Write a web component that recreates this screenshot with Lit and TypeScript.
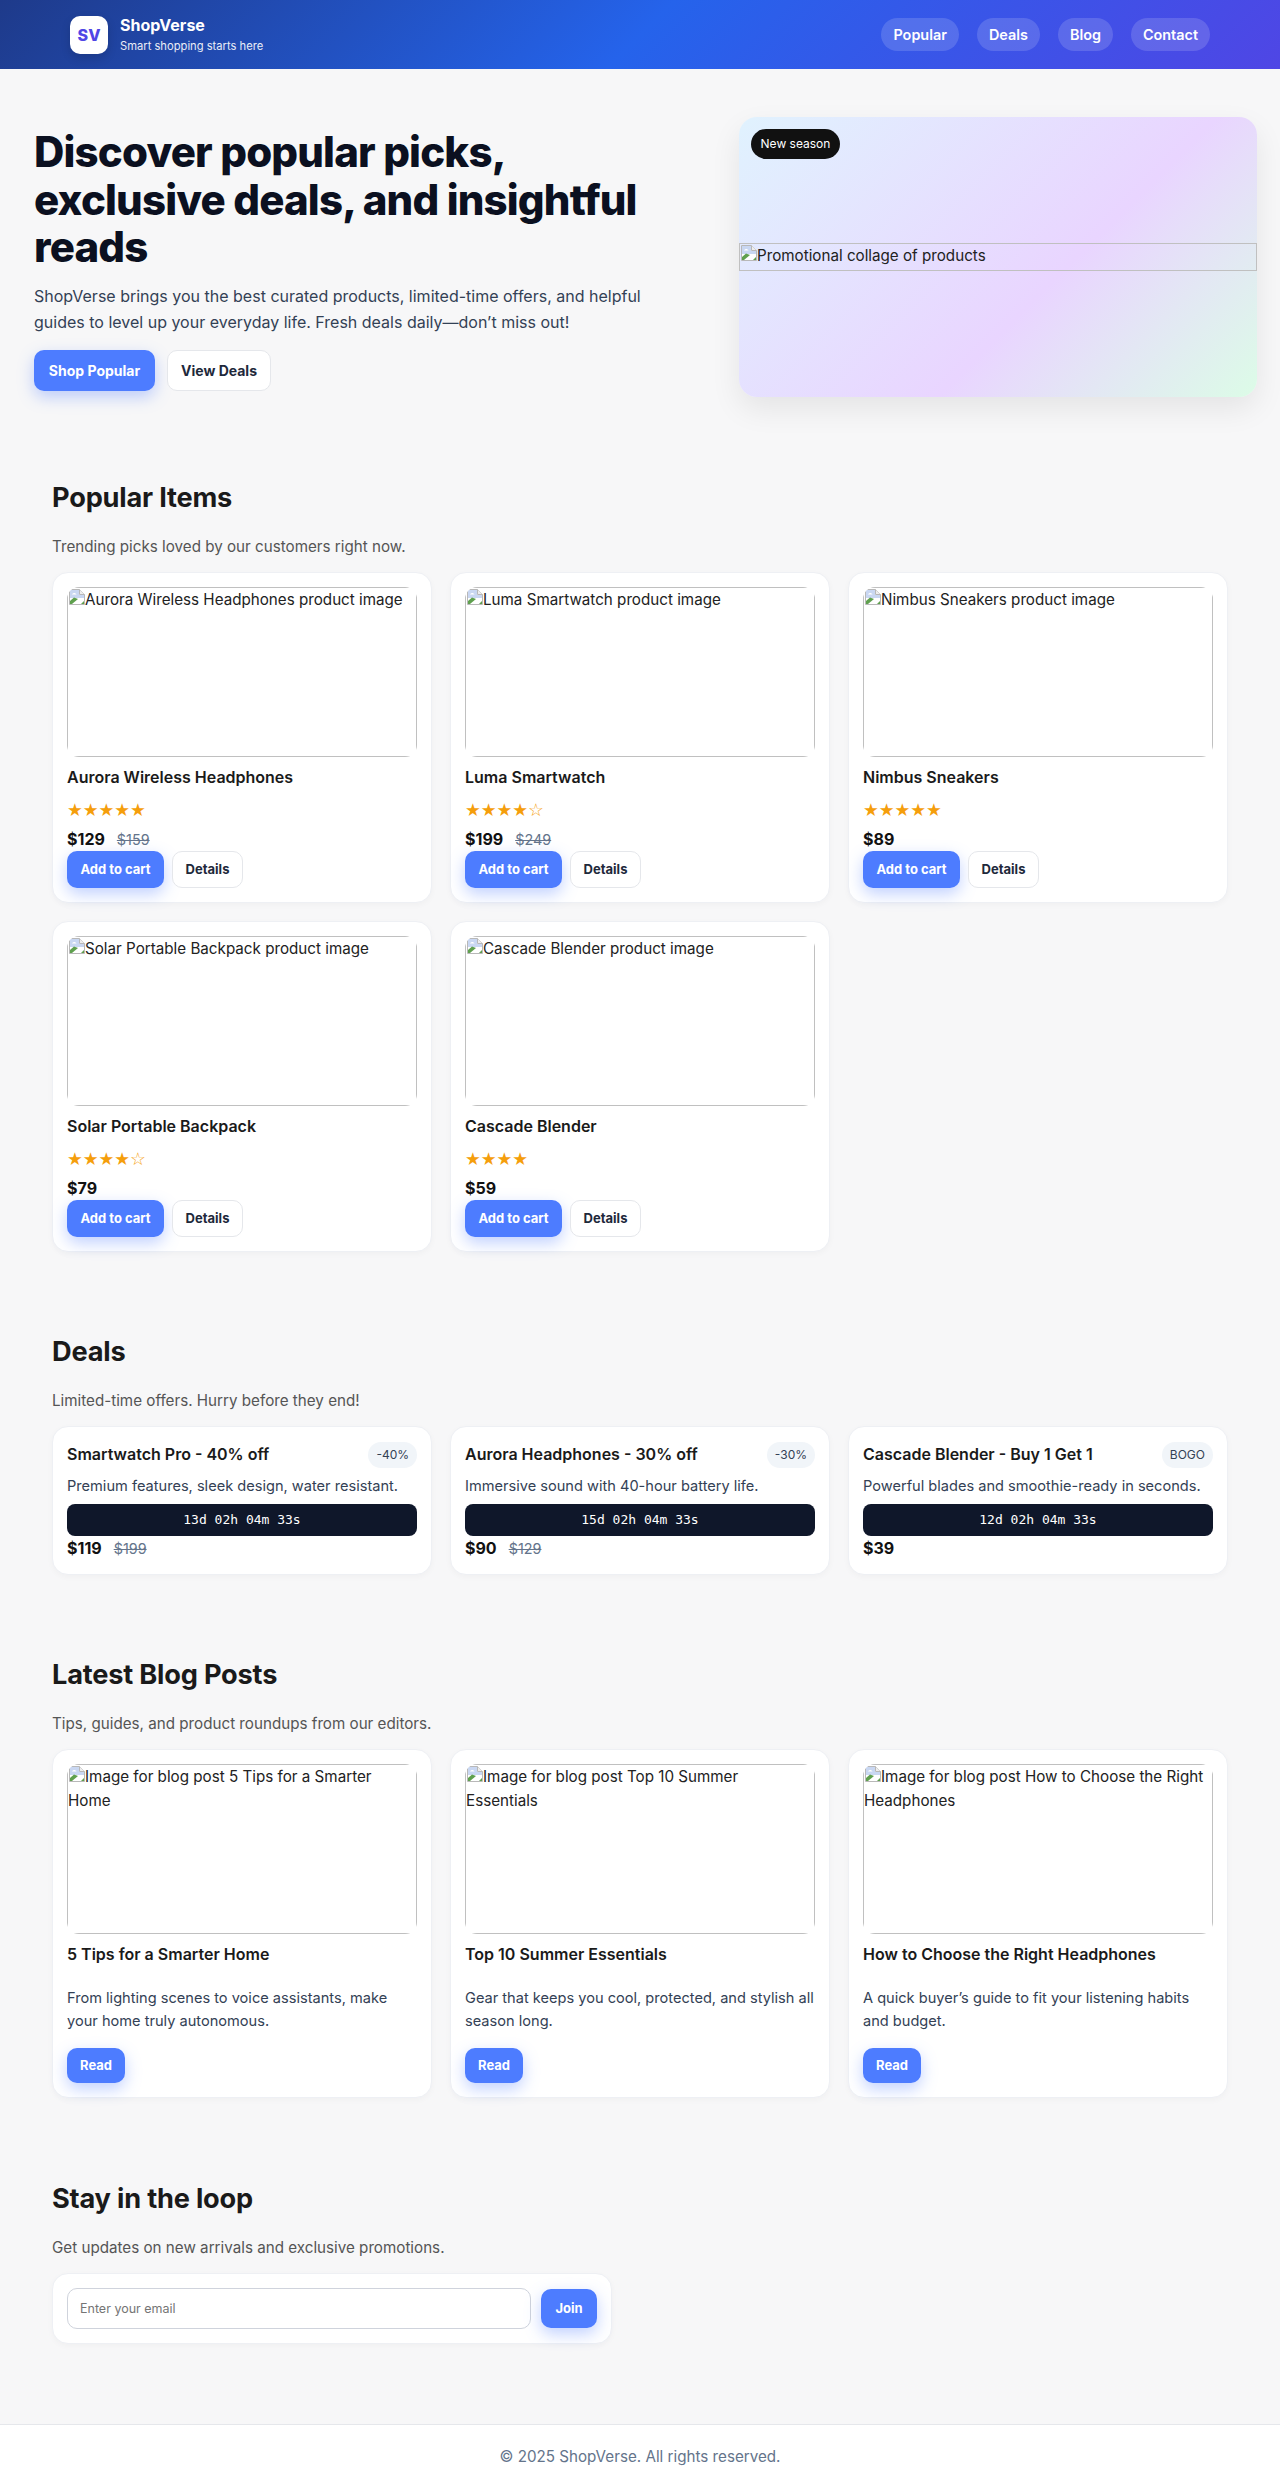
import { LitElement, html, css } from "lit";
import { customElement } from "lit/decorators.js";

const brokenIcon = html`<svg class="bi" viewBox="0 0 16 16" width="16" height="16" aria-hidden="true">
  <path d="M0.5 0.5H10.5L15.5 5.5V15.5H0.5Z" fill="#fff" stroke="#b8b8b8"/>
  <path d="M10.5 0.5V5.5H15.5" fill="#eee" stroke="#b8b8b8"/>
  <path d="M1 1H10V6H15V9L1 9Z" fill="#c9d7f2"/>
  <path d="M3 5.5C4 3.5 6.5 3.5 7.5 5.5Z" fill="#fff"/>
  <path d="M1 15V12L5 8.5L9 10L3 15Z" fill="#5fa04e"/>
  <path d="M12 15L15 12V15Z" fill="#5fa04e"/>
</svg>`;

const products = [
  { n: "Aurora Wireless Headphones", r: "★★★★★", p: "$129", o: "$159" },
  { n: "Luma Smartwatch", r: "★★★★☆", p: "$199", o: "$249" },
  { n: "Nimbus Sneakers", r: "★★★★★", p: "$89", o: "" },
  { n: "Solar Portable Backpack", r: "★★★★☆", p: "$79", o: "" },
  { n: "Cascade Blender", r: "★★★★", p: "$59", o: "" },
];
const deals = [
  { t: "Smartwatch Pro - 40% off", b: "-40%", d: "Premium features, sleek design, water resistant.", c: "13d 02h 04m 33s", p: "$119", o: "$199" },
  { t: "Aurora Headphones - 30% off", b: "-30%", d: "Immersive sound with 40-hour battery life.", c: "15d 02h 04m 33s", p: "$90", o: "$129" },
  { t: "Cascade Blender - Buy 1 Get 1", b: "BOGO", d: "Powerful blades and smoothie-ready in seconds.", c: "12d 02h 04m 33s", p: "$39", o: "" },
];
const posts = [
  { t: "5 Tips for a Smarter Home", d: "From lighting scenes to voice assistants, make your home truly autonomous." },
  { t: "Top 10 Summer Essentials", d: "Gear that keeps you cool, protected, and stylish all season long." },
  { t: "How to Choose the Right Headphones", d: "A quick buyer’s guide to fit your listening habits and budget." },
];

@customElement("app-root")
export class AppRoot extends LitElement {
  static styles = css`
    :host { display: block; background: #f7f7f8; color: #1a1a1a; font-family: Inter, "Noto Sans", sans-serif; font-size: 16px; line-height: 1.5; }
    * { box-sizing: border-box; }
    h1, h2, h3, p { margin: 0; }
    .top { height: 69px; background: linear-gradient(135deg, #1e3a8a 0%, #2563eb 50%, #4f46e5 100%); color: #fff; }
    .top-in { width: 1140px; height: 100%; margin: 0 auto; display: flex; align-items: center; justify-content: space-between; }
    .brand { display: flex; align-items: center; gap: 12px; }
    .logo { width: 38px; height: 38px; border-radius: 10px; background: #fff; color: #4f46e5; font-weight: 800; font-size: 16px; display: flex; align-items: center; justify-content: center; box-shadow: 0 4px 10px rgba(0,0,0,.15); }
    .bname { font-weight: 700; font-size: 16px; line-height: 20px; }
    .bsub { font-size: 11.2px; line-height: 18px; opacity: .9; margin-top: 2px; }
    nav { display: flex; gap: 18px; }
    nav a { height: 33px; padding: 0 12px; border-radius: 17px; background: rgba(255,255,255,.15); color: #fff; font-weight: 600; font-size: 14.4px; display: flex; align-items: center; }

    .hero { padding: 48px 23px 0 34px; display: grid; grid-template-columns: 1fr 518px; gap: 40px; height: 328px; }
    h1 { font-size: 42px; line-height: 47.5px; font-weight: 800; letter-spacing: -0.84px; color: #0b1020; margin-top: 11px; }
    .lead { font-size: 16px; line-height: 26px; color: #334155; margin-top: 12px; width: 620px; }
    .actions { display: flex; gap: 12px; margin-top: 15px; }
    .btn { border-radius: 10px; font-weight: 700; font-size: 14px; display: inline-flex; align-items: center; justify-content: center; }
    .pri { background: #4d7cff; color: #fff; box-shadow: 0 6px 16px rgba(77,124,255,.35); }
    .sec { background: #fff; color: #1e293b; border: 1px solid #e5e7eb; }
    .hb1 { width: 121px; height: 41px; }
    .hb2 { width: 104px; height: 41px; }
    .visual { position: relative; height: 280px; border-radius: 18px; background: linear-gradient(135deg, #e0f2fe 0%, #e9d5ff 60%, #dcfce7 100%); box-shadow: 0 12px 30px rgba(0,0,0,.08); display: flex; align-items: center; }
    .chip { position: absolute; left: 12px; top: 12px; height: 30px; width: 89px; border-radius: 15px; background: #111; color: #fff; font-size: 12px; display: flex; align-items: center; justify-content: center; }
    .alt { width: 100%; height: 28px; border: 1px solid #c0c0c0; color: #222; font-size: 15.2px; line-height: 24px; }
    .bi { display: inline-block; vertical-align: top; margin: 1px 0 0 1px; }

    section { width: 1176px; margin: 0 auto; }
    h2 { font-size: 27.2px; line-height: 34px; font-weight: 700; color: #1a1a1a; letter-spacing: -0.2px; }
    .sub { color: #555; font-size: 15.2px; line-height: 24px; margin-top: 20px; }
    .grid { display: grid; grid-template-columns: repeat(3, 380px); gap: 18px; margin-top: 13px; }
    .card { background: #fff; border: 1px solid #eef0f4; border-radius: 16px; padding: 14px; box-shadow: 0 2px 6px rgba(0,0,0,.03); }
    .pic { height: 170px; border-radius: 12px; overflow: hidden; }
    .pic > div { height: 100%; border: 1px solid #c0c0c0; color: #222; font-size: 15.2px; line-height: 24px; }
    .pt { font-size: 16px; line-height: 24px; font-weight: 600; color: #1a1a1a; margin-top: 8px; }
    .stars { font-family: "DejaVu Sans", sans-serif; color: #f59e0b; font-size: 17.6px; line-height: 24px; margin-top: 9px; height: 24px; }
    .price { display: flex; align-items: baseline; gap: 12px; line-height: 24px; margin-top: 5px; height: 24px; }
    .now { font-size: 16px; font-weight: 700; color: #111; }
    .old { font-size: 14.4px; color: #64748b; text-decoration: line-through; }
    .row { display: flex; gap: 8px; }
    .ab { width: 97px; height: 37px; font-size: 13px; }
    .db { width: 71px; height: 37px; font-size: 13px; }
    .pop { margin-top: 84px; }
    .deals { margin-top: 83px; }
    .deal { height: 149px; padding: 14px; }
    .dh { display: flex; justify-content: space-between; align-items: flex-start; margin-top: 1px; }
    .dt { font-size: 16px; font-weight: 600; line-height: 24px; margin-top: 0; }
    .badge { height: 26px; padding: 0 8px; border-radius: 13px; background: #f1f5f9; color: #334155; font-size: 12px; display: flex; align-items: center; }
    .dd { font-size: 14.6px; color: #334155; line-height: 22px; margin-top: 7px; }
    .timer { height: 32px; margin-top: 7px; border-radius: 8px; background: #0f172a; color: #fff; font: 13px/32px "DejaVu Sans Mono", monospace; text-align: center; }
    .deal .price { margin-top: 0; }
    .blog { margin-top: 83px; }
    .bd { font-size: 14.6px; line-height: 23px; color: #334155; margin-top: 21px; }
    .rb { width: 58px; height: 35px; font-size: 13px; margin-top: 15px; }
    .news { margin-top: 84px; }
    .form { width: 560px; height: 71px; margin-top: 13px; padding: 14px; display: flex; align-items: center; gap: 10px; }
    input { width: 464px; height: 41px; border: 1px solid #cfd3dc; border-radius: 10px; padding: 0 12px; font: 12.5px Inter, sans-serif; background: #fff; }
    input::placeholder { color: #757575; }
    .jb { width: 56px; height: 39px; font-size: 13px; }
    footer { margin-top: 80px; height: 65px; background: #fff; border-top: 1px solid #e5e7eb; color: #64748b; font-size: 15.2px; display: flex; align-items: center; justify-content: center; }
  `;

  private pic(alt: string) {
    return html`<div class="pic"><div>${brokenIcon}${alt}</div></div>`;
  }

  private price(p: string, o: string) {
    return html`<div class="price"><span class="now">${p}</span>${o ? html`<span class="old">${o}</span>` : ""}</div>`;
  }

  render() {
    return html`
      <header class="top">
        <div class="top-in">
          <div class="brand">
            <div class="logo">SV</div>
            <div><div class="bname">ShopVerse</div><div class="bsub">Smart shopping starts here</div></div>
          </div>
          <nav><a>Popular</a><a>Deals</a><a>Blog</a><a>Contact</a></nav>
        </div>
      </header>
      <div class="hero">
        <div>
          <h1>Discover popular picks, exclusive deals, and insightful reads</h1>
          <p class="lead">ShopVerse brings you the best curated products, limited-time offers, and helpful guides to level up your everyday life. Fresh deals daily—don’t miss out!</p>
          <div class="actions"><span class="btn pri hb1">Shop Popular</span><span class="btn sec hb2">View Deals</span></div>
        </div>
        <div class="visual">
          <span class="chip">New season</span>
          <div class="alt">${brokenIcon}Promotional collage of products</div>
        </div>
      </div>
      <section class="pop">
        <h2>Popular Items</h2>
        <p class="sub">Trending picks loved by our customers right now.</p>
        <div class="grid">
          ${products.map((x) => html`<div class="card">
            ${this.pic(`${x.n} product image`)}
            <h3 class="pt">${x.n}</h3>
            <div class="stars">${x.r}</div>
            ${this.price(x.p, x.o)}
            <div class="row"><span class="btn pri ab">Add to cart</span><span class="btn sec db">Details</span></div>
          </div>`)}
        </div>
      </section>
      <section class="deals">
        <h2>Deals</h2>
        <p class="sub">Limited-time offers. Hurry before they end!</p>
        <div class="grid">
          ${deals.map((x) => html`<div class="card deal">
            <div class="dh"><h3 class="pt dt">${x.t}</h3><span class="badge">${x.b}</span></div>
            <p class="dd">${x.d}</p>
            <div class="timer">${x.c}</div>
            ${this.price(x.p, x.o)}
          </div>`)}
        </div>
      </section>
      <section class="blog">
        <h2>Latest Blog Posts</h2>
        <p class="sub">Tips, guides, and product roundups from our editors.</p>
        <div class="grid">
          ${posts.map((x) => html`<div class="card">
            ${this.pic(`Image for blog post ${x.t}`)}
            <h3 class="pt">${x.t}</h3>
            <p class="bd">${x.d}</p>
            <span class="btn pri rb">Read</span>
          </div>`)}
        </div>
      </section>
      <section class="news">
        <h2>Stay in the loop</h2>
        <p class="sub">Get updates on new arrivals and exclusive promotions.</p>
        <div class="card form">
          <input type="email" placeholder="Enter your email" />
          <span class="btn pri jb">Join</span>
        </div>
      </section>
      <footer>© 2025 ShopVerse. All rights reserved.</footer>
    `;
  }
}
